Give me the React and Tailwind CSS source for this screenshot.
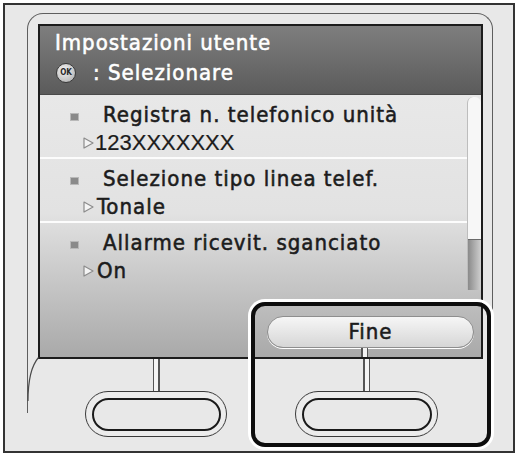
const din =
  "font-['DejaVu_Sans_Condensed','DejaVu_Sans',sans-serif] font-stretch-condensed tracking-[1px] [-webkit-text-stroke:0.55px_currentColor]";

const items = [
  { title: 'Registra n. telefonico unità', value: '123XXXXXXX', plain: true },
  { title: 'Selezione tipo linea telef.', value: 'Tonale' },
  { title: 'Allarme ricevit. sganciato', value: 'On' },
];

const Arrow = () => (
  <svg width="11" height="12" viewBox="0 0 11 12" className="shrink-0">
    <path d="M1 1 L10 6 L1 11 Z" fill="#f4f4f4" stroke="#8c8c8c" strokeWidth="1.2" strokeLinejoin="round" />
  </svg>
);

const Row = ({ item, height }) => (
  <div className={`pl-[30px] pt-[7px] ${height}`}>
    <div className="flex h-[26px]">
      <span className="mt-[11px] mr-[24px] h-[8px] w-[9px] shrink-0 border border-[#b8b8b8] bg-[#8a8a8a]" />
      <span className={`${din} text-[22px] leading-[26px] text-[#1c1c1c]`}>{item.title}</span>
    </div>
    <div className="mt-[2px] flex h-[26px] items-center pl-[13px]">
      <Arrow />
      <span
        className={
          item.plain
            ? "ml-[1px] font-['Liberation_Sans',Arial,sans-serif] text-[22px] leading-[26px] text-[#1c1c1c] [-webkit-text-stroke:0.2px_currentColor]"
            : `ml-[3px] ${din} text-[22px] leading-[26px] text-[#1c1c1c]`
        }
      >
        {item.value}
      </span>
    </div>
  </div>
);

const Connector = ({ h }) => (
  <div className={`flex w-[7px] justify-between bg-[#f4f4f4] ${h}`}>
    <span className="w-[1.5px] bg-[#555]" />
    <span className="w-[1.5px] bg-[#555]" />
  </div>
);

const HardKey = () => (
  <div className="flex flex-col items-center">
    <Connector h="h-[32px]" />
    <div className="h-[46px] w-full rounded-full border-[1.5px] border-[#3a3a3a] bg-[#ececec] p-[5.5px]">
      <div className="h-full w-full rounded-full border-[2.5px] border-[#1a1a1a] bg-[#e8e8e8]" />
    </div>
  </div>
);

export default function App() {
  return (
    <div className="relative h-[456px] w-[518px] bg-white p-[3px]">
      <div className="h-full border-2 border-[#333] bg-[#e8e8e8] pl-[22px] pr-[20px] pt-[8px]">
        <div className="relative h-[400px] rounded-t-[16px] border-x border-t border-[#5e5e5e] pl-[10px] pr-[9px] pt-[10px]">
          {/* screen */}
          <div className="flex h-[335px] flex-col border-2 border-[#1c1c1c]">
            <div className="h-[69px] shrink-0 border-b border-[#4a4a4a] bg-[linear-gradient(to_bottom,#7e7e7e,#5b5b5b)] pl-[15px] pt-[4px]">
              <div className={`${din} text-[22px] leading-[26px] text-white`}>Impostazioni utente</div>
              <div className="mt-[4px] flex h-[26px] items-center">
                <span className="ml-[1px] flex h-[20px] w-[20px] items-center justify-center rounded-full border border-[#3a3a3a] bg-[radial-gradient(circle_at_40%_35%,#f4f4f4,#a9a9a9)] font-['DejaVu_Sans_Condensed','DejaVu_Sans',sans-serif] text-[8px] font-bold leading-none text-[#2a2a2a]">
                  OK
                </span>
                <span className={`ml-[17px] ${din} text-[22px] leading-[26px] text-white`}>: Selezionare</span>
              </div>
            </div>
            <div className="flex flex-1 flex-col bg-[linear-gradient(to_bottom,#e8e8e8_0%,#e2e2e2_45%,#a9a9a9_100%)]">
              <div className="flex h-[195px]">
                <div className="flex-1">
                  <Row item={items[0]} height="h-[62px]" />
                  <div className="h-[2px] bg-white/90" />
                  <Row item={items[1]} height="h-[62px]" />
                  <div className="h-[2px] bg-white/90" />
                  <Row item={items[2]} height="h-[67px]" />
                </div>
                <div className="mt-[2px] flex w-[14px] flex-col rounded-t-[6px] border-l border-[#bdbdbd] bg-[#f7f7f7]">
                  <div className="flex-1" />
                  <div className="h-[51px] border-t border-[#6a6a6a] bg-[linear-gradient(to_right,#8a8a8a,#cfcfcf)]" />
                </div>
              </div>
              <div className="flex flex-1 justify-end pr-[7px] pt-[26px]">
                <div className="flex w-[207px] flex-col">
                  <div className="flex h-[32px] items-center justify-center rounded-full border border-[#8e8e8e] bg-[linear-gradient(to_bottom,#f6f6f6,#d6d6d6)] shadow-[0_1px_0_#ffffff]">
                    <span className={`${din} text-[22px] leading-[26px] text-[#1c1c1c]`}>Fine</span>
                  </div>
                  <div className="ml-[94px] flex-1">
                    <Connector h="h-full" />
                  </div>
                </div>
              </div>
            </div>
          </div>
          {/* hard keys */}
          <div className="flex pl-[47px]">
            <div className="w-[142px]">
              <HardKey />
            </div>
            <div className="ml-[68px] w-[143px]">
              <HardKey />
            </div>
          </div>
          <svg className="absolute left-[-1.5px] top-[343px]" width="14" height="48" viewBox="0 0 14 48">
            <path d="M11.5 0.5 C 5 8, 1 20, 1 44" fill="none" stroke="#4a4a4a" strokeWidth="1.2" />
          </svg>
        </div>
      </div>
      {/* highlight frame */}
      <div className="absolute left-[251px] top-[302px] h-[145px] w-[240px] rounded-[14px] border-[4px] border-[#0d0d0d] shadow-[0_0_0_3px_#ffffff]" />
    </div>
  );
}
